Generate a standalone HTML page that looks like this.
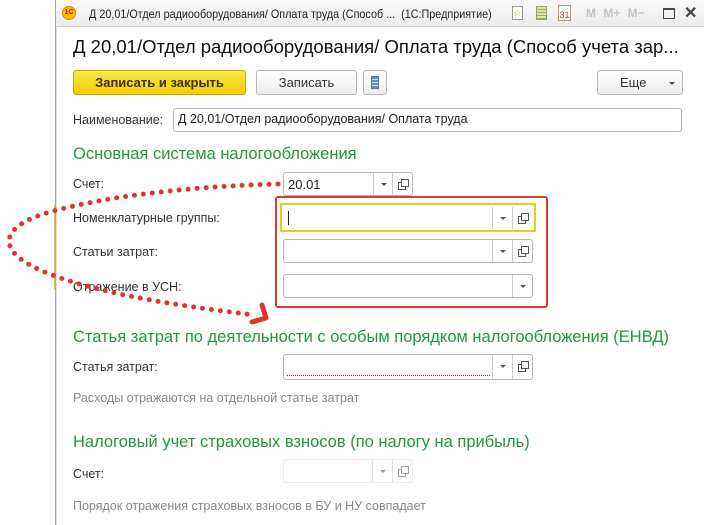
<!DOCTYPE html>
<html><head><meta charset="utf-8"><style>
*{box-sizing:border-box;margin:0;padding:0}
body{width:704px;height:525px;overflow:hidden;background:#fff;font-family:"Liberation Sans",sans-serif;position:relative;font-size:12px;color:#333}
.a{position:absolute}
.win{left:55px;top:0;width:660px;height:525px;border-left:1px solid #a8a8a8;background:#fff;box-shadow:inset 1px 0 0 #e0e0e0}
.tb{left:56px;top:0;width:648px;height:27px;background:linear-gradient(#fafafa,#ececec);border-bottom:1px solid #d0d0d0}
.lbl{font-size:12.5px;color:#333}
.in{border:1px solid #b5b5b5;border-radius:3px;background:#fff;height:24px}
.dd{position:absolute;top:0;bottom:0;width:20px;border-left:1px solid #ccc}
.dd:after{content:"";position:absolute;left:7px;top:10px;border:3px solid transparent;border-top:3px solid #555}
.cp{position:absolute;top:0;bottom:0;width:20px;border-left:1px solid #ccc}
.cp:before{content:"";position:absolute;left:5px;top:9px;width:6px;height:6px;border:1px solid #555}
.cp:after{content:"";position:absolute;left:8px;top:6px;width:6px;height:6px;border:1px solid #555;background:#fff}
.g{color:#1c9a3c;font-size:16.5px}
.btn{border:1px solid #b8b8b8;border-radius:3px;background:linear-gradient(#fff,#ececec);height:25px;text-align:center;line-height:23px;font-size:13px;color:#333}
</style></head><body>
<div class="a" style="left:54px;top:205px;width:2px;height:85px;background:#f0c800"></div>
<div class="a win"></div>
<div class="a tb"></div>
<div class="a" style="left:62px;top:6px;width:14px;height:14px;border-radius:50%;background:#f5c400;border:1px solid #d48a00;font-size:7px;color:#c00;line-height:12px;text-align:center;font-weight:bold">1С</div>
<div class="a" style="left:89px;top:7px;font-size:12px;color:#222;transform:scaleX(0.9);transform-origin:0 0;white-space:nowrap">Д 20,01/Отдел радиооборудования/ Оплата труда (Способ ...&nbsp;&nbsp;(1С:Предприятие)</div>
<div class="a" style="left:512px;top:6px;width:11px;height:14px;border:1px solid #999;background:#fff;font-size:9px;color:#c90;text-align:center;line-height:12px">☆</div>
<div class="a" style="left:536px;top:6px;width:11px;height:14px;border:1px solid #8a6;background:repeating-linear-gradient(#e8e0a0 0 2px,#9a8 2px 3px)"></div>
<div class="a" style="left:558px;top:5px;width:13px;height:16px;border:1px solid #c96;background:#fff;font-size:9px;color:#d33;text-align:center;line-height:18px">31</div>
<div class="a" style="left:586px;top:6px;font-size:12px;color:#c4c4c4;font-weight:bold;word-spacing:4px">M M+ M−</div>
<div class="a" style="left:663px;top:8px;width:12px;height:11px;border:1px solid #444;border-top-width:2px"></div>
<div class="a" style="left:684px;top:3px;font-size:16px;color:#444;font-weight:bold">✕</div>

<div class="a" style="left:73px;top:36px;font-size:18.5px;color:#111;white-space:nowrap">Д 20,01/Отдел радиооборудования/ Оплата труда (Способ учета зар...</div>

<div class="a btn" style="left:73px;top:70px;width:173px;background:linear-gradient(#ffe94a,#f2cc00);border-color:#c9a800;color:#3a3000;font-weight:bold">Записать и закрыть</div>
<div class="a btn" style="left:256px;top:70px;width:101px">Записать</div>
<div class="a btn" style="left:363px;top:70px;width:24px"><div style="margin:5px auto;width:8px;height:13px;background:repeating-linear-gradient(#6a8cb0 0 2px,#d0dcea 2px 3px);border:1px solid #5a7a9a"></div></div>
<div class="a btn" style="left:597px;top:70px;width:86px;text-align:left;padding-left:22px">Еще<span style="position:absolute;right:7px;top:11px;border:3px solid transparent;border-top:3px solid #555"></span></div>

<div class="a lbl" style="left:73px;top:113px">Наименование:</div>
<div class="a in" style="left:173px;top:108px;width:509px;padding:3px 4px;font-size:12.5px;color:#222">Д 20,01/Отдел радиооборудования/ Оплата труда</div>

<div class="a g" style="left:73px;top:145px">Основная система налогообложения</div>

<div class="a lbl" style="left:73px;top:177px">Счет:</div>
<div class="a in" style="left:283px;top:172px;width:130px;font-size:13px;padding:4px 4px;color:#222">20.01<div class="dd" style="left:89px"></div><div class="cp" style="left:108px"></div></div>

<div class="a" style="left:275px;top:196px;width:273px;height:112px;border:2px solid #e03a2e;border-radius:3px"></div>
<div class="a lbl" style="left:73px;top:211px">Номенклатурные группы:</div>
<div class="a" style="left:280px;top:203px;width:256px;height:29px;border:2px solid #f5c518"></div>
<div class="a in" style="left:283px;top:206px;width:250px;border-color:#fff"><div class="a" style="left:4px;top:4px;width:1px;height:14px;background:#222"></div><div class="dd" style="left:208px"></div><div class="cp" style="left:228px"></div></div>
<div class="a lbl" style="left:73px;top:245px">Статьи затрат:</div>
<div class="a in" style="left:283px;top:239px;width:250px"><div class="dd" style="left:208px"></div><div class="cp" style="left:228px"></div></div>
<div class="a lbl" style="left:73px;top:280px">Отражение в УСН:</div>
<div class="a in" style="left:283px;top:274px;width:250px"><div class="dd" style="left:228px"></div></div>

<div class="a g" style="left:73px;top:328px">Статья затрат по деятельности с особым порядком налогообложения (ЕНВД)</div>
<div class="a lbl" style="left:73px;top:360px">Статья затрат:</div>
<div class="a in" style="left:283px;top:354px;width:250px;height:26px"><div class="a" style="left:3px;top:20px;width:203px;height:1px;background:repeating-linear-gradient(90deg,#e00 0 1px,transparent 1px 2px)"></div><div class="dd" style="left:208px"></div><div class="cp" style="left:228px"></div></div>
<div class="a" style="left:73px;top:391px;font-size:12.5px;color:#888">Расходы отражаются на отдельной статье затрат</div>

<div class="a g" style="left:73px;top:433px">Налоговый учет страховых взносов (по налогу на прибыль)</div>
<div class="a lbl" style="left:73px;top:467px">Счет:</div>
<div class="a in" style="left:283px;top:459px;width:130px;border-color:#ddd;opacity:.55"><div class="dd" style="left:88px"></div><div class="cp" style="left:108px"></div></div>
<div class="a" style="left:73px;top:499px;font-size:12.5px;color:#888">Порядок отражения страховых взносов в БУ и НУ совпадает</div>

<svg class="a" style="left:0;top:0" width="704" height="525">
<path d="M278,184 C200,186 110,195 50,212 C0,226 -5,250 40,270 C90,292 170,305 255,315" fill="none" stroke="#e0352b" stroke-width="5" stroke-linecap="round" stroke-dasharray="0 9"/>
<path d="M262,305 L266,318 L252,322" fill="none" stroke="#e0352b" stroke-width="5" stroke-linecap="round" stroke-linejoin="round"/>
</svg>
</body></html>
